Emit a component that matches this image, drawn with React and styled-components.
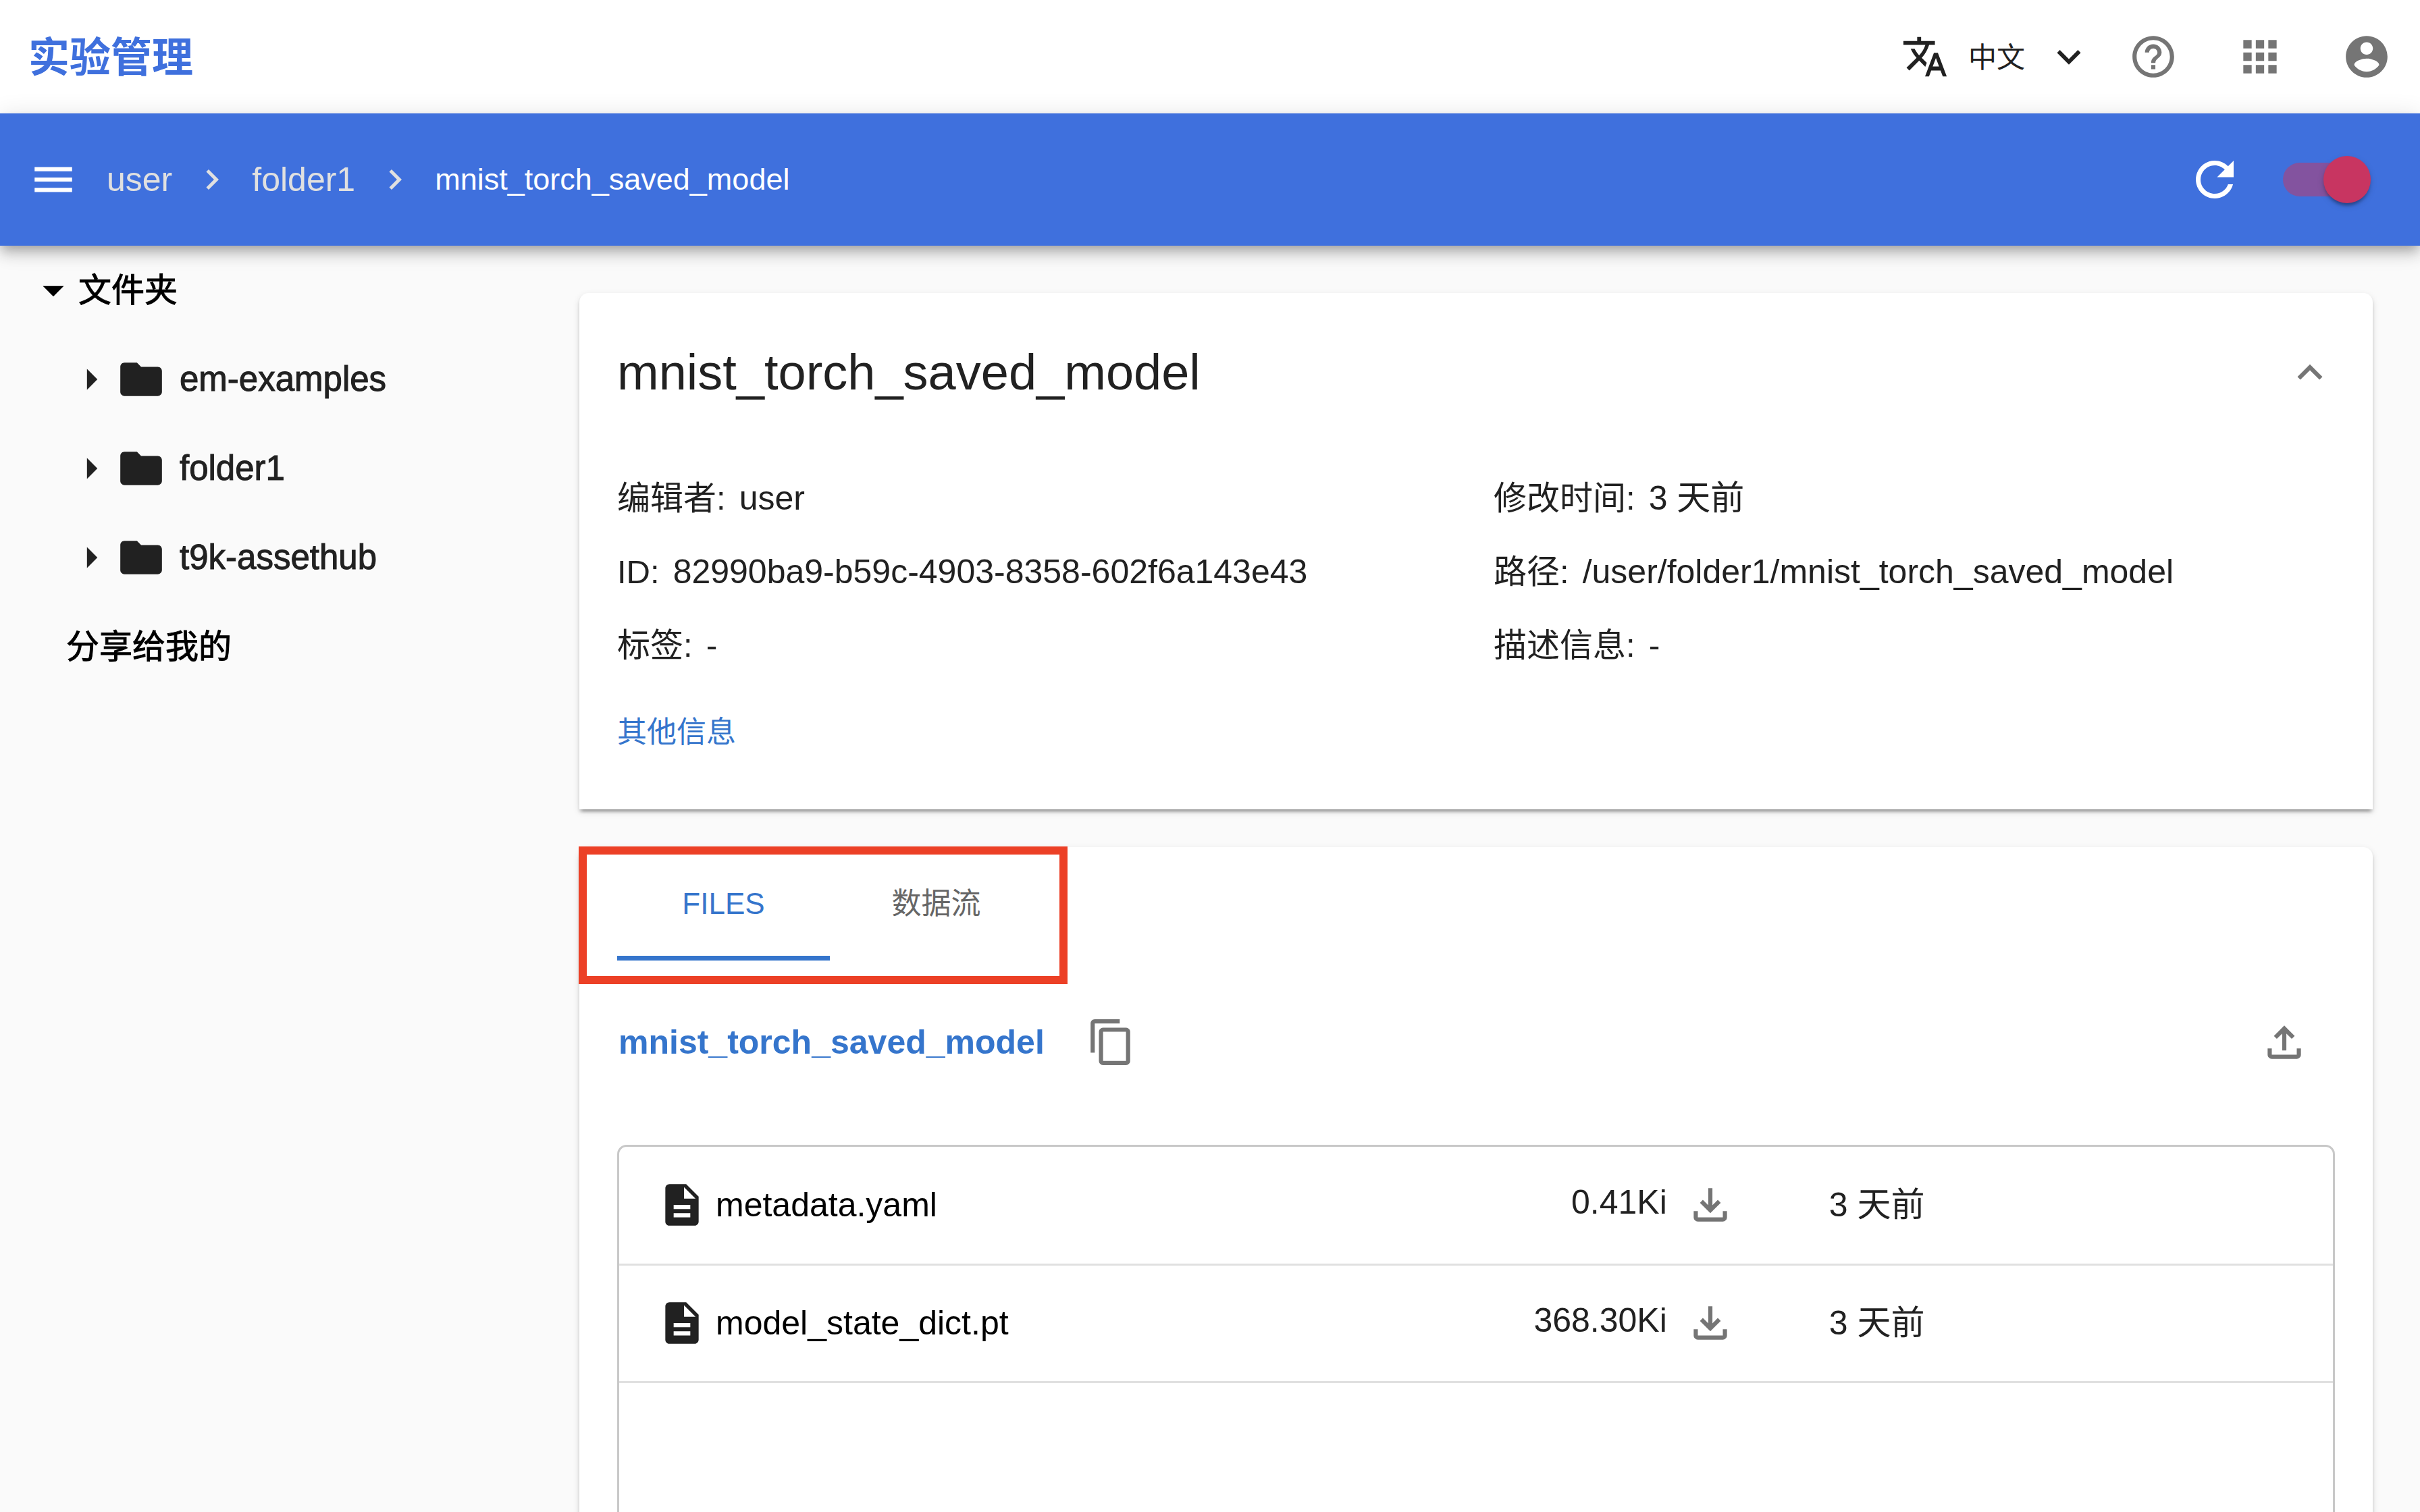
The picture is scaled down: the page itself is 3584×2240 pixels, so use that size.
import React, { useState } from "react";
import styled, { createGlobalStyle, css } from "styled-components";

const GlobalStyle = createGlobalStyle`
  * { box-sizing: border-box; }
  body {
    margin: 0;
    background: #fafafa;
    color: #212121;
    font-family: "Liberation Sans", "Noto Sans CJK SC", sans-serif;
    font-size: 50px;
    line-height: 72px;
  }
  button, select, input { font: inherit; color: inherit; margin: 0; }
  a { color: inherit; text-decoration: none; }
`;

const icons = {
  translate:
    "M12.87 15.07l-2.54-2.51.03-.03c1.74-1.94 2.98-4.17 3.71-6.53H17V4h-7V2H8v2H1v1.99h11.17C11.5 7.92 10.44 9.75 9 11.35 8.07 10.32 7.3 9.19 6.69 8h-2c.73 1.63 1.73 3.17 2.98 4.56l-5.09 5.02L4 19l5-5 3.11 3.11.76-2.04zM18.5 10h-2L12 22h2l1.12-3h4.75L21 22h2l-4.5-12zm-2.62 7l1.62-4.33L19.12 17h-3.24z",
  expandMore: "M16.59 8.59L12 13.17 7.41 8.59 6 10l6 6 6-6z",
  expandLess: "M12 8l-6 6 1.41 1.41L12 10.83l4.59 4.58L18 14z",
  help: "M11 18h2v-2h-2v2zm1-16C6.48 2 2 6.48 2 12s4.48 10 10 10 10-4.48 10-10S17.52 2 12 2zm0 18c-4.41 0-8-3.59-8-8s3.59-8 8-8 8 3.59 8 8-3.59 8-8 8zm0-14c-2.21 0-4 1.79-4 4h2c0-1.1.9-2 2-2s2 .9 2 2c0 2-3 1.75-3 5h2c0-2.25 3-2.5 3-5 0-2.21-1.79-4-4-4z",
  apps: "M4 8h4V4H4v4zm6 12h4v-4h-4v4zm-6 0h4v-4H4v4zm0-6h4v-4H4v4zm6 0h4v-4h-4v4zm6-10v4h4V4h-4zm-6 4h4V4h-4v4zm6 6h4v-4h-4v4zm0 6h4v-4h-4v4z",
  account:
    "M12 2C6.48 2 2 6.48 2 12s4.48 10 10 10 10-4.48 10-10S17.52 2 12 2zm0 3c1.66 0 3 1.34 3 3s-1.34 3-3 3-3-1.34-3-3 1.34-3 3-3zm0 14.2c-2.5 0-4.71-1.28-6-3.22.03-1.99 4-3.08 6-3.08 1.99 0 5.97 1.09 6 3.08-1.29 1.94-3.5 3.22-6 3.22z",
  menu: "M3 18h18v-2H3v2zm0-5h18v-2H3v2zm0-7v2h18V6H3z",
  chevronRight: "M10 6L8.59 7.41 13.17 12l-4.58 4.59L10 18l6-6z",
  refresh:
    "M17.65 6.35C16.2 4.9 14.21 4 12 4c-4.42 0-7.99 3.58-7.99 8s3.57 8 7.99 8c3.73 0 6.84-2.55 7.73-6h-2.08c-.82 2.33-3.04 4-5.65 4-3.31 0-6-2.69-6-6s2.69-6 6-6c1.66 0 3.14.69 4.22 1.78L13 11h7V4l-2.35 2.35z",
  caretDown: "M7 10l5 5 5-5z",
  caretRight: "M10 17l5-5-5-5v10z",
  folder:
    "M10 4H4c-1.1 0-1.99.9-1.99 2L2 18c0 1.1.9 2 2 2h16c1.1 0 2-.9 2-2V8c0-1.1-.9-2-2-2h-8l-2-2z",
  file: "M14 2H6c-1.1 0-1.99.9-1.99 2L4 20c0 1.1.89 2 1.99 2H18c1.1 0 2-.9 2-2V8l-6-6zm2 16H8v-2h8v2zm0-4H8v-2h8v2zm-3-5V3.5L18.5 9H13z",
  copy: "M16 1H4c-1.1 0-2 .9-2 2v14h2V3h12V1zm3 4H8c-1.1 0-2 .9-2 2v14c0 1.1.9 2 2 2h11c1.1 0 2-.9 2-2V7c0-1.1-.9-2-2-2zm0 16H8V7h11v14z",
  upload:
    "M18 15v3H6v-3H4v3c0 1.1.9 2 2 2h12c1.1 0 2-.9 2-2v-3h-2zM7 9l1.41 1.41L11 7.83V16h2V7.83l2.59 2.58L17 9l-5-5-5 5z",
  download:
    "M18 15v3H6v-3H4v3c0 1.1.9 2 2 2h12c1.1 0 2-.9 2-2v-3h-2zm-1-4l-1.41-1.41L13 12.17V4h-2v8.17L8.41 9.59 7 11l5 5 5-5z",
};

const Svg = styled.svg`
  display: block;
  flex: none;
  width: ${(p) => p.$size}px;
  height: ${(p) => p.$size}px;
  fill: currentColor;
`;

function Icon({ name, size = 74 }) {
  return (
    <Svg viewBox="0 0 24 24" $size={size} aria-hidden="true">
      <path d={icons[name]} />
    </Svg>
  );
}

const Shell = styled.div`
  display: flex;
  flex-direction: column;
  height: 100vh;
  overflow: hidden;
`;

const plainButton = css`
  display: flex;
  align-items: center;
  justify-content: center;
  flex: none;
  padding: 0;
  border: 0;
  background: none;
  cursor: pointer;
`;

const IconButton = styled.button`
  ${plainButton}
  width: ${(p) => p.$width || 74}px;
  color: ${(p) => p.$color || "#757575"};
`;

/* Top header */

const TopBar = styled.header`
  display: flex;
  align-items: center;
  justify-content: space-between;
  flex: none;
  height: 168px;
  padding-left: 42px;
  background: #fff;
`;

const Brand = styled.h1`
  margin: 0;
  padding-top: 4px;
  color: #3f70dd;
  font-size: 61px;
  line-height: 88px;
  font-weight: 700;
`;

const TopActions = styled.div`
  display: flex;
  align-items: center;
`;

const Language = styled.label`
  display: flex;
  align-items: center;
  gap: 29px;
  margin-right: 11px;
`;

const LanguageSelect = styled.select`
  appearance: none;
  padding: 4px 0 0;
  border: 0;
  background: none;
  font-size: 42px;
  line-height: 60px;
`;

/* Blue toolbar */

const Toolbar = styled.div`
  position: relative;
  z-index: 1;
  display: flex;
  align-items: center;
  justify-content: space-between;
  flex: none;
  height: 196px;
  padding: 0 84px 0 42px;
  background: #3f70dd;
  color: #fff;
  box-shadow:
    0 7px 14px -4px rgba(0, 0, 0, 0.2),
    0 14px 18px 0 rgba(0, 0, 0, 0.14),
    0 4px 35px 0 rgba(0, 0, 0, 0.12);
`;

const ToolbarGroup = styled.div`
  display: flex;
  align-items: center;
  gap: ${(p) => p.$gap}px;
`;

const Crumbs = styled.nav`
  display: flex;
  align-items: center;
  gap: 29px;
  color: #e0e0e0;
`;

const CurrentCrumb = styled.span`
  color: #fff;
  font-size: 45px;
`;

const Switch = styled.input`
  position: relative;
  appearance: none;
  width: 119px;
  height: 50px;
  border-radius: 25px;
  background: rgba(200, 53, 97, 0.5);
  cursor: pointer;

  &::before {
    content: "";
    position: absolute;
    top: -10px;
    left: ${(p) => (p.checked ? 60 : -12)}px;
    width: 70px;
    height: 70px;
    border-radius: 50%;
    background: #c83561;
    box-shadow:
      0 7px 4px -4px rgba(0, 0, 0, 0.2),
      0 4px 4px 0 rgba(0, 0, 0, 0.14),
      0 4px 11px 0 rgba(0, 0, 0, 0.12);
  }
`;

/* Body */

const Body = styled.div`
  display: flex;
  flex: 1;
  min-height: 0;
`;

const Sidebar = styled.aside`
  display: flex;
  flex-direction: column;
  flex: none;
  gap: 4px;
  width: 788px;
  padding-top: 2px;
`;

const TreeRow = styled.button`
  ${plainButton}
  justify-content: flex-start;
  height: 128px;
  padding-left: ${(p) => p.$indent}px;
  color: ${(p) => (p.$root ? "#000" : "#212121")};
  font-size: ${(p) => (p.$root ? 49 : 51)}px;
  -webkit-text-stroke: 1px currentColor;
`;

const FolderLabel = styled.span`
  display: flex;
  align-items: center;
  gap: 20px;
`;

const Main = styled.main`
  display: flex;
  flex-direction: column;
  flex: 1;
  gap: 56px;
  min-width: 0;
  padding: 70px;
`;

const Card = styled.section`
  position: relative;
  flex: none;
  padding: 0 56px;
  border-radius: ${(p) => (p.$squareBottom ? "14px 14px 0 0" : "14px")};
  background: #fff;
  box-shadow:
    0 7px 4px -4px rgba(0, 0, 0, 0.2),
    0 4px 4px 0 rgba(0, 0, 0, 0.14),
    0 4px 11px 0 rgba(0, 0, 0, 0.12);
`;

const CardHeader = styled.div`
  display: flex;
  align-items: center;
  justify-content: space-between;
  height: 236px;
`;

const CardTitle = styled.h2`
  margin: 0;
  font-size: 74px;
  line-height: 100px;
  font-weight: 400;
`;

const Details = styled.dl`
  display: grid;
  grid-template-columns: 1fr 1fr;
  column-gap: 52px;
  margin: 0;
  padding-top: 13px;
`;

const Detail = styled.div`
  display: flex;
  align-items: center;
  gap: 20px;
  height: 109px;

  dt { font-size: 49px; }
  dd { margin: 0; }
`;

const MoreInfo = styled.div`
  padding: 45px 0 84px;
  color: #3575cc;
  font-size: 44px;
  line-height: 60px;
`;

/* Files card */

const Tabs = styled.div`
  display: flex;
  height: 168px;
`;

const Tab = styled.button`
  ${plainButton}
  width: 315px;
  border-top: 7px solid transparent;
  border-bottom: 7px solid ${(p) => (p.$active ? "#3575cc" : "transparent")};
  color: ${(p) => (p.$active ? "#3575cc" : "#666")};
  font-size: 44px;
`;

const Highlight = styled.div`
  position: absolute;
  top: -1px;
  left: -1px;
  width: 724px;
  height: 204px;
  border: 12px solid #ec4026;
  pointer-events: none;
`;

const PathBar = styled.div`
  display: flex;
  align-items: center;
  gap: 62px;
  height: 154px;
  margin: 44px 0 75px;
  padding: 0 38px 0 2px;
`;

const PathLink = styled.a`
  color: #3575cc;
  font-weight: 700;
`;

const Spacer = styled.div`
  flex: 1;
`;

const FileBox = styled.div`
  min-height: 840px;
  border: 3px solid #c8c8c8;
  border-radius: 14px;
`;

const FileTable = styled.table`
  width: 100%;
  table-layout: fixed;
  border-collapse: collapse;
`;

const FileRow = styled.tr`
  height: 174px;
  border-bottom: 3px solid #e0e0e0;
`;

const Cell = styled.td`
  width: ${(p) => p.$width}%;
  padding: 0 0 0 ${(p) => p.$left || 0}px;
`;

const FileName = styled.a`
  display: flex;
  align-items: center;
  gap: 13px;
  padding-left: 56px;
  color: #000;

  svg { color: #212121; }
`;

const FileSize = styled.div`
  display: flex;
  align-items: center;
  justify-content: flex-end;
  gap: 27px;
  padding-right: 73px;
`;

const SizeText = styled.span`
  padding-bottom: 8px;
`;

const folders = ["em-examples", "folder1", "t9k-assethub"];

const details = [
  ["编辑者:", "user"],
  ["修改时间:", "3 天前"],
  ["ID:", "82990ba9-b59c-4903-8358-602f6a143e43"],
  ["路径:", "/user/folder1/mnist_torch_saved_model"],
  ["标签:", "-"],
  ["描述信息:", "-"],
];

const files = [
  { name: "metadata.yaml", size: "0.41Ki", modified: "3 天前" },
  { name: "model_state_dict.pt", size: "368.30Ki", modified: "3 天前" },
];

const tabs = ["FILES", "数据流"];

export default function App() {
  const [live, setLive] = useState(true);
  const [tab, setTab] = useState(0);

  return (
    <Shell>
      <GlobalStyle />
      <TopBar>
        <Brand>实验管理</Brand>
        <TopActions>
          <Language>
            <Icon name="translate" size={70} />
            <LanguageSelect aria-label="语言">
              <option>中文</option>
            </LanguageSelect>
            <Icon name="expandMore" size={70} />
          </Language>
          <IconButton $width={158} aria-label="帮助"><Icon name="help" /></IconButton>
          <IconButton $width={158} aria-label="应用"><Icon name="apps" /></IconButton>
          <IconButton $width={158} aria-label="账户"><Icon name="account" /></IconButton>
        </TopActions>
      </TopBar>

      <Toolbar>
        <ToolbarGroup $gap={42}>
          <IconButton $color="#fff" aria-label="菜单"><Icon name="menu" /></IconButton>
          <Crumbs aria-label="路径">
            <a href="#user">user</a>
            <Icon name="chevronRight" size={60} />
            <a href="#folder1">folder1</a>
            <Icon name="chevronRight" size={60} />
            <CurrentCrumb>mnist_torch_saved_model</CurrentCrumb>
          </Crumbs>
        </ToolbarGroup>
        <ToolbarGroup $gap={59}>
          <IconButton $color="#fff" $width={84} aria-label="刷新">
            <Icon name="refresh" size={84} />
          </IconButton>
          <Switch
            type="checkbox"
            role="switch"
            aria-label="自动刷新"
            checked={live}
            onChange={(e) => setLive(e.target.checked)}
          />
        </ToolbarGroup>
      </Toolbar>

      <Body>
        <Sidebar>
          <TreeRow $root $indent={42}>
            <Icon name="caretDown" />
            <span>文件夹</span>
          </TreeRow>
          {folders.map((name) => (
            <TreeRow key={name} $indent={98}>
              <Icon name="caretRight" />
              <FolderLabel>
                <Icon name="folder" />
                {name}
              </FolderLabel>
            </TreeRow>
          ))}
          <TreeRow $root $indent={98}>分享给我的</TreeRow>
        </Sidebar>

        <Main>
          <Card $squareBottom>
            <CardHeader>
              <CardTitle>mnist_torch_saved_model</CardTitle>
              <IconButton aria-label="收起"><Icon name="expandLess" /></IconButton>
            </CardHeader>
            <Details>
              {details.map(([label, value]) => (
                <Detail key={label}>
                  <dt>{label}</dt>
                  <dd>{value}</dd>
                </Detail>
              ))}
            </Details>
            <MoreInfo>
              <a href="#more">其他信息</a>
            </MoreInfo>
          </Card>

          <Card>
            <Tabs role="tablist">
              {tabs.map((label, i) => (
                <Tab
                  key={label}
                  role="tab"
                  aria-selected={tab === i}
                  $active={tab === i}
                  onClick={() => setTab(i)}
                >
                  {label}
                </Tab>
              ))}
            </Tabs>
            <Highlight />
            <PathBar>
              <PathLink href="#root">mnist_torch_saved_model</PathLink>
              <IconButton aria-label="复制"><Icon name="copy" /></IconButton>
              <Spacer />
              <IconButton aria-label="上传"><Icon name="upload" /></IconButton>
            </PathBar>
            <FileBox>
              <FileTable>
                <tbody>
                  {files.map((file) => (
                    <FileRow key={file.name}>
                      <Cell $width={40}>
                        <FileName href={"#" + file.name}>
                          <Icon name="file" />
                          {file.name}
                        </FileName>
                      </Cell>
                      <Cell $width={28}>
                        <FileSize>
                          <SizeText>{file.size}</SizeText>
                          <IconButton aria-label="下载"><Icon name="download" /></IconButton>
                        </FileSize>
                      </Cell>
                      <Cell $width={32} $left={66}>{file.modified}</Cell>
                    </FileRow>
                  ))}
                </tbody>
              </FileTable>
            </FileBox>
          </Card>
        </Main>
      </Body>
    </Shell>
  );
}
